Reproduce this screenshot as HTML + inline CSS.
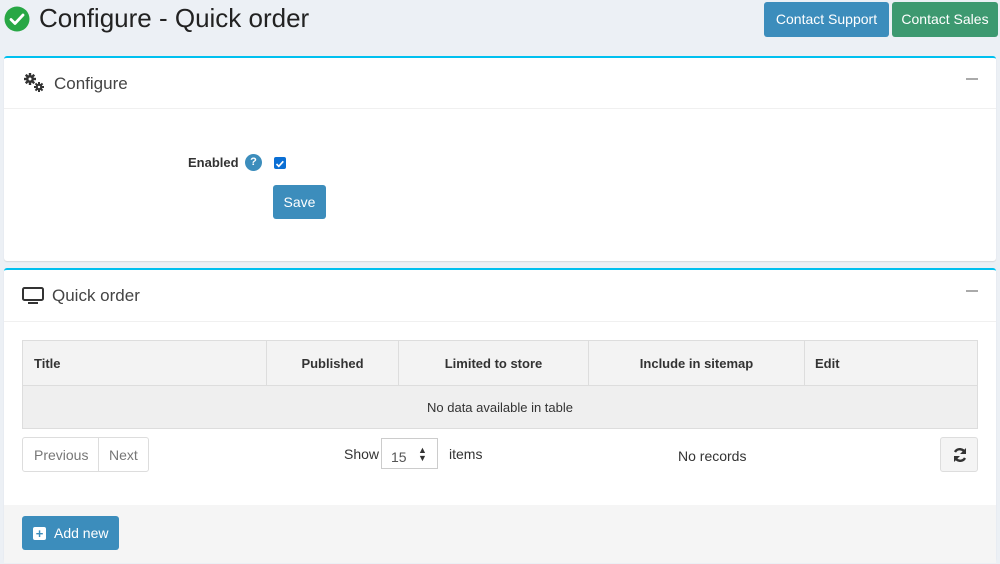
<!DOCTYPE html>
<html><head><meta charset="utf-8"><style>
*{box-sizing:border-box;margin:0;padding:0}
body{width:1000px;height:564px;background:#ecf0f5;font-family:"Liberation Sans",sans-serif;color:#333;position:relative;overflow:hidden;font-size:14px}
.abs{position:absolute}
.card{position:absolute;left:4px;width:992px;background:#fff;border-top:2px solid #00c0ef;border-radius:3px;box-shadow:0 1px 1px rgba(0,0,0,.1)}
.btn{position:absolute;color:#fff;border-radius:3px;font-size:14px;text-align:center}
th{font-weight:bold;font-size:13px;text-align:center;border-right:1px solid #ddd}
</style></head><body>
<svg class="abs" style="left:4px;top:6px" width="26" height="26" viewBox="0 0 26 26"><circle cx="13" cy="13" r="12.5" fill="#28a745"/><path d="M7 13.5l4 4 8-8.5" stroke="#fff" stroke-width="2.8" fill="none" stroke-linecap="round" stroke-linejoin="round"/></svg>
<div class="abs" style="left:39px;top:3px;font-size:26px;color:#222">Configure - Quick order</div>
<div class="btn" style="left:764px;top:2px;width:125px;height:35px;line-height:35px;background:#3c8dbc">Contact Support</div>
<div class="btn" style="left:892px;top:2px;width:106px;height:35px;line-height:35px;background:#3d9970">Contact Sales</div>

<div class="card" style="top:56px;height:205px">
 <svg class="abs" style="left:18px;top:14px" width="24" height="22" viewBox="0 0 24 22">
  <g transform="translate(8,7)" fill="#333"><circle r="4"/><rect x="-1.2" y="-6" width="2.4" height="12"/><rect x="-1.2" y="-6" width="2.4" height="12" transform="rotate(45)"/><rect x="-1.2" y="-6" width="2.4" height="12" transform="rotate(90)"/><rect x="-1.2" y="-6" width="2.4" height="12" transform="rotate(135)"/><circle r="1.5" fill="#fff"/></g>
  <g transform="translate(17,15)" fill="#333"><circle r="3.4"/><rect x="-1" y="-5" width="2" height="10"/><rect x="-1" y="-5" width="2" height="10" transform="rotate(45)"/><rect x="-1" y="-5" width="2" height="10" transform="rotate(90)"/><rect x="-1" y="-5" width="2" height="10" transform="rotate(135)"/><circle r="1.2" fill="#fff"/></g>
 </svg>
 <div class="abs" style="left:50px;top:16px;font-size:17px;color:#444">Configure</div>
 <div class="abs" style="left:962px;top:20px;width:12px;height:2px;background:#aaa"></div>
 <div class="abs" style="left:0;top:50px;width:992px;height:1px;background:#f0f0f0"></div>
 <div class="abs" style="left:184px;top:97px;font-size:13px;font-weight:bold;color:#333">Enabled</div>
 <div class="abs" style="left:241px;top:96px;width:17px;height:17px;border-radius:50%;background:#3c8dbc;color:#fff;font-size:11px;text-align:center;line-height:17px;font-weight:bold">?</div>
 <div class="abs" style="left:270px;top:99px;width:12px;height:12px;border-radius:2px;background:#0b6fd4"><svg width="12" height="12"><path d="M2.5 6l2.3 2.3 4.5-5" stroke="#fff" stroke-width="1.7" fill="none"/></svg></div>
 <div class="btn" style="left:269px;top:127px;width:53px;height:34px;line-height:34px;background:#3c8dbc">Save</div>
</div>

<div class="card" style="top:268px;height:293px">
 <svg class="abs" style="left:18px;top:17px" width="22" height="18" viewBox="0 0 22 18"><rect x="1" y="1" width="20" height="12" rx="1.5" fill="none" stroke="#333" stroke-width="2"/><rect x="6" y="15" width="10" height="2" fill="#333"/></svg>
 <div class="abs" style="left:48px;top:16px;font-size:17px;color:#444">Quick order</div>
 <div class="abs" style="left:962px;top:20px;width:12px;height:2px;background:#aaa"></div>
 <div class="abs" style="left:0;top:51px;width:992px;height:1px;background:#f0f0f0"></div>
 <table class="abs" style="left:18px;top:70px;width:956px;border-collapse:collapse;background:#f3f3f3;border:1px solid #ddd">
  <tr style="height:45px;border-bottom:1px solid #ddd"><th style="width:244px;text-align:left;padding-left:11px">Title</th><th style="width:132px">Published</th><th style="width:190px">Limited to store</th><th style="width:216px">Include in sitemap</th><th style="text-align:left;padding-left:10px;border-right:0">Edit</th></tr>
  <tr style="height:43px;background:#efefef"><td colspan="5" style="text-align:center;font-size:13px">No data available in table</td></tr>
 </table>
 <div class="abs" style="left:18px;top:167px;width:127px;height:35px;border:1px solid #ddd;border-radius:3px;font-size:14px;color:#777">
  <span class="abs" style="left:11px;top:9px">Previous</span><div class="abs" style="left:75px;top:0;width:1px;height:33px;background:#ddd"></div><span class="abs" style="left:86px;top:9px">Next</span></div>
 <div class="abs" style="left:340px;top:176px;font-size:14px">Show</div>
 <div class="abs" style="left:377px;top:168px;width:57px;height:31px;border:1px solid #ccc;font-size:14px;color:#555;padding:10px 0 0 9px">15<span class="abs" style="left:36px;top:7px;font-size:9px;line-height:8px;color:#333">▲<br>▼</span></div>
 <div class="abs" style="left:445px;top:176px;font-size:14px">items</div>
 <div class="abs" style="left:674px;top:178px;font-size:14px">No records</div>
 <div class="abs" style="left:936px;top:167px;width:38px;height:35px;border:1px solid #ddd;border-radius:3px;background:#f4f4f4"><svg class="abs" style="left:11px;top:9px" width="16" height="16" viewBox="0 0 16 16"><path d="M13 6A5.5 5.5 0 0 0 3 5M3 10a5.5 5.5 0 0 0 10 1" stroke="#333" stroke-width="2.4" fill="none"/><path d="M14 1v6h-6z M2 15V9h6z" fill="#333"/></svg></div>
 <div class="abs" style="left:0;top:235px;width:992px;height:58px;background:#f5f5f5"></div>
 <div class="btn" style="left:18px;top:246px;width:97px;height:34px;line-height:34px;background:#3c8dbc;text-align:left;padding-left:32px">Add new</div>
 <div class="abs" style="left:29px;top:257px;width:13px;height:13px;background:#fff;border-radius:2px;color:#3c8dbc;font-size:13px;line-height:13px;text-align:center;font-weight:bold">+</div>
</div>
</body></html>
